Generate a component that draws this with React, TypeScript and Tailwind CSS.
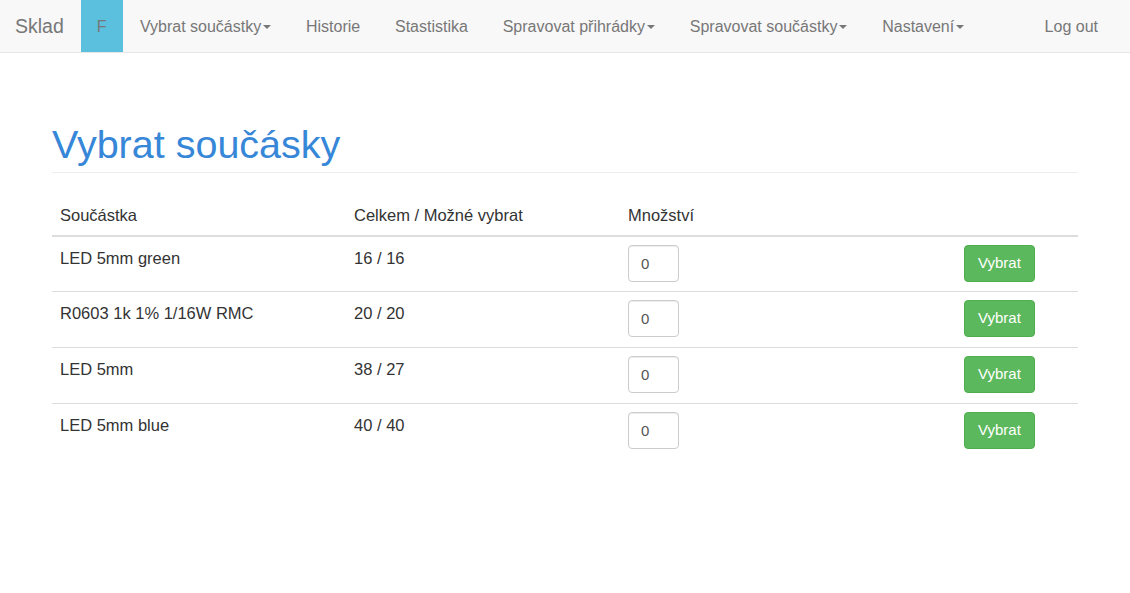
const navItems = [
  { label: "Vybrat součástky", caret: true },
  { label: "Historie" },
  { label: "Stastistika" },
  { label: "Spravovat přihrádky", caret: true },
  { label: "Spravovat součástky", caret: true },
  { label: "Nastavení", caret: true },
];

const parts = [
  { name: "LED 5mm green", total: 16, avail: 16 },
  { name: "R0603 1k 1% 1/16W RMC", total: 20, avail: 20 },
  { name: "LED 5mm", total: 38, avail: 27 },
  { name: "LED 5mm blue", total: 40, avail: 40 },
];

const Caret = () => (
  <span className="ml-[2px] inline-block h-0 w-0 border-x-[4px] border-t-[4px] border-x-transparent border-t-[#777] align-middle" />
);

const App = () => {
  return (
    <div className="min-h-[593px] bg-white font-['Liberation_Sans',Arial,sans-serif] text-[16.5px] text-[#333]">
      <nav className="flex h-[53px] items-stretch border-b border-[#e7e7e7] bg-[#f8f8f8] text-[16px] text-[#777]">
        <a className="flex items-center pl-[15px] pr-[17px] pt-[1px] text-[19.5px]">Sklad</a>
        <a className="flex items-center bg-[#5bc0de] px-4 pt-[1px]">F</a>
        {navItems.map((item) => (
          <a key={item.label} className="flex items-center px-[17.4px] pt-[1px]">
            {item.label}
            {item.caret && <Caret />}
          </a>
        ))}
        <a className="ml-auto mr-[16px] flex items-center px-4 pt-[1px]">Log out</a>
      </nav>

      <div className="px-[52px] pt-[70px]">
        <div className="border-b border-[#eee] pb-[6px]">
          <h1 className="text-[39.5px] leading-[43px] text-[#3787d8]">Vybrat součásky</h1>
        </div>

        <table className="mt-[23px] w-full border-collapse text-left">
          <thead>
            <tr className="border-b-2 border-[#ddd]">
              <th className="w-[294px] px-2 py-2 font-normal leading-[23px]">Součástka</th>
              <th className="w-[274px] px-2 py-2 font-normal leading-[23px]">Celkem / Možné vybrat</th>
              <th className="w-[336px] px-2 py-2 font-normal leading-[23px]">Množství</th>
              <th className="px-2 py-2" />
            </tr>
          </thead>
          <tbody>
            {parts.map((p, i) => (
              <tr key={p.name} className="border-b border-[#ddd] last:border-b-0">
                <td className="px-2 pt-[10px] align-top leading-[23px]">{p.name}</td>
                <td className="px-2 pt-[10px] align-top leading-[23px]">
                  {p.total} / {p.avail}
                </td>
                <td className={`px-2 pt-[8px] align-top ${i === 0 ? "pb-[9px]" : "pb-[10px]"}`}>
                  <input
                    defaultValue="0"
                    className="block h-[37px] w-[51px] rounded-[4px] border border-[#ccc] px-3 text-[15px] text-[#555] shadow-[inset_0_1px_1px_rgba(0,0,0,0.075)] outline-none"
                  />
                </td>
                <td className={`px-2 pt-[8px] align-top ${i === 0 ? "pb-[9px]" : "pb-[10px]"}`}>
                  <button className="block h-[37px] rounded-[4px] border border-[#4cae4c] bg-[#5cb85c] px-[13px] text-[15px] text-white">
                    Vybrat
                  </button>
                </td>
              </tr>
            ))}
          </tbody>
        </table>
      </div>
    </div>
  );
};

export default App;
